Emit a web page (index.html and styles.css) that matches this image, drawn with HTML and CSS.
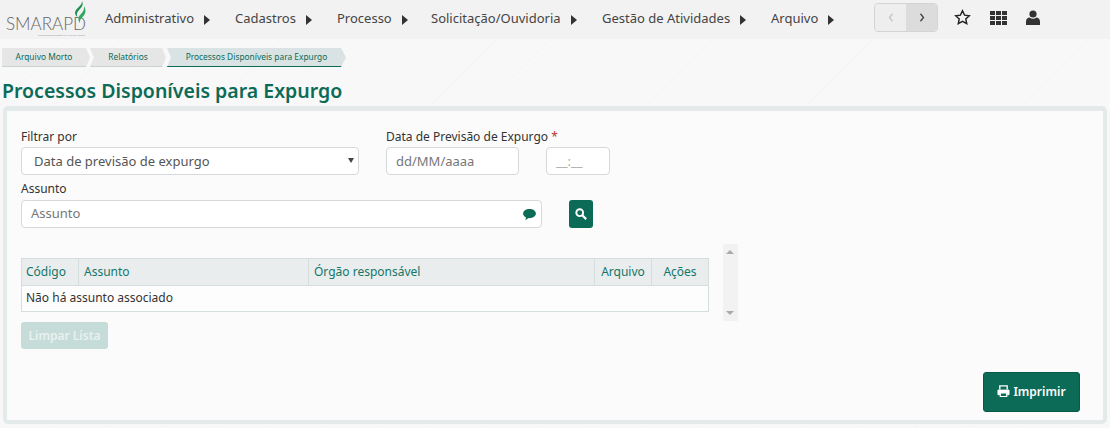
FILE: index.html
```
<!DOCTYPE html>
<html lang="pt">
<head>
<meta charset="utf-8">
<title>Processos Disponíveis para Expurgo</title>
<link rel="stylesheet" href="styles.css">
</head>
<body>
<header class="topbar">
  <a class="logo">
    <span class="logo-word">SMARAPD</span>
    <span class="logo-tag">Simplificando Gestão e a Vida na Cidade</span>
    <svg class="logo-flame" viewBox="0 0 12 22" width="12" height="22"><path d="M8 0c1.500 3 .5 5.500-2 8C3.500 10.500 2 13 3.500 16 1.500 14.500 0 12 2 9c2-3 6-4.500 6-9z" fill="#1f8f4e"/><path d="M10 5c2.500 4.500 1.500 8-1 10.500-2 2-3.500 3.500-3 6.500-2.500-3-2-6 .5-8.500C8.500 11.500 10.500 9 10 5z" fill="#2fa860"/></svg>
  </a>
  <nav class="menu">
    <a class="menu-item m1">Administrativo<i class="caret"></i></a>
    <a class="menu-item m2">Cadastros<i class="caret"></i></a>
    <a class="menu-item m3">Processo<i class="caret"></i></a>
    <a class="menu-item m4">Solicitação/Ouvidoria<i class="caret"></i></a>
    <a class="menu-item m5">Gestão de Atividades<i class="caret"></i></a>
    <a class="menu-item m6">Arquivo<i class="caret"></i></a>
  </nav>
  <div class="pager">
    <span class="pager-btn"><svg viewBox="0 0 8 12" width="6" height="9"><path d="M6 1 2 6l4 5" fill="none" stroke="#c4c4c4" stroke-width="1.8"/></svg></span>
    <span class="pager-btn active"><svg viewBox="0 0 8 12" width="6" height="9"><path d="M2 1l4 5-4 5" fill="none" stroke="#444" stroke-width="1.8"/></svg></span>
  </div>
  <div class="tools">
    <svg viewBox="0 0 24 24" width="17" height="17"><path d="M12 2.500l2.900 6.200 6.700.8-5 4.600 1.400 6.700-6-3.400-6 3.400 1.400-6.700-5-4.600 6.700-.8z" fill="none" stroke="#222" stroke-width="2"/></svg>
    <svg viewBox="0 0 17 14" width="17" height="14"><path d="M0 0h5v4H0zM6 0h5v4H6zM12 0h5v4h-5zM0 5h5v4H0zM6 5h5v4H6zM12 5h5v4h-5zM0 10h5v4H0zM6 10h5v4H6zM12 10h5v4h-5z" fill="#333"/></svg>
    <svg viewBox="0 0 14 15" width="14" height="15"><circle cx="7" cy="4" r="3.600" fill="#333"/><path d="M0 15v-3.500c0-2.500 2-4 3.500-4 1 .8 2.200 1.200 3.500 1.200s2.500-.4 3.500-1.200c1.500 0 3.500 1.500 3.500 4V15z" fill="#333"/></svg>
  </div>
</header>

<main class="page">
  <ol class="crumbs">
    <li class="crumb c1">Arquivo Morto</li>
    <li class="crumb c2">Relatórios</li>
    <li class="crumb c3 current">Processos Disponíveis para Expurgo</li>
  </ol>
  <h1 class="title">Processos Disponíveis para Expurgo</h1>

  <section class="panel">
    <div class="form-row first">
      <div class="field f-filter">
        <label class="label">Filtrar por</label>
        <div class="control select">Data de previsão de expurgo<i class="select-arrow"></i></div>
      </div>
      <div class="field f-date">
        <label class="label">Data de Previsão de Expurgo <span class="req">*</span></label>
        <div class="date-controls">
          <div class="control date">dd/MM/aaaa</div>
          <div class="control time">__:__</div>
        </div>
      </div>
    </div>
    <div class="form-row second">
      <div class="field f-subject">
        <label class="label">Assunto</label>
        <div class="control subject">Assunto
          <svg class="bubble" viewBox="0 0 14 12" width="13" height="11"><path d="M7 0c3.900 0 7 2.200 7 5s-3.100 5-7 5l-1-.1C4.800 11 3.400 11.700 2 12c.7-.8 1.100-1.700 1.200-2.800C1.300 8.300 0 6.800 0 5c0-2.800 3.100-5 7-5z" fill="#0b6b57"/></svg>
        </div>
      </div>
      <button class="search-btn"><svg viewBox="0 0 14 14" width="12" height="12"><circle cx="5.500" cy="5.500" r="4" fill="none" stroke="#fff" stroke-width="2.200"/><path d="M8.500 8.500 13 13" stroke="#fff" stroke-width="2.600"/></svg></button>
    </div>

    <div class="table-wrap">
      <table class="grid">
        <thead>
          <tr>
            <th class="col-code">Código</th>
            <th class="col-subject">Assunto</th>
            <th class="col-org">Órgão responsável</th>
            <th class="col-file">Arquivo</th>
            <th class="col-act">Ações</th>
          </tr>
        </thead>
        <tbody>
          <tr><td colspan="5">Não há assunto associado</td></tr>
        </tbody>
      </table>
      <div class="scroll"><i class="up"></i><i class="down"></i></div>
    </div>
    <button class="clear-btn">Limpar Lista</button>
    <div class="actions">
      <button class="print-btn"><svg viewBox="0 0 14 13" width="13" height="12"><path d="M3 5V1h8v4" fill="none" stroke="#fff" stroke-width="1.500"/><path d="M1 5.500h12v5h-2V8H3v2.500H1z" fill="#fff" stroke="#fff"/><path d="M3.500 8.500h7v4h-7z" fill="none" stroke="#fff" stroke-width="1.300"/></svg>Imprimir</button>
    </div>
  </section>
</main>
</body>
</html>
```
FILE: styles.css
```
* { box-sizing: border-box; }
html, body { margin: 0; height: 100%; }
body {
  width: 1110px;
  height: 428px;
  overflow: hidden;
  font-family: "Noto Sans", "Open Sans", sans-serif;
  font-size: 12px;
  color: #333;
  background: #f8f8f8 repeating-linear-gradient(135deg, #f8f8f8 0, #f8f8f8 36px, #f5f5f5 37px, #f8f8f8 38px);
}
.topbar {
  height: 39px;
  background: #f2f2f2;
  display: flex;
  align-items: flex-start;
}
.logo {
  position: relative;
  display: block;
  width: 105px;
  height: 39px;
  flex: none;
}
.logo-word {
  position: absolute;
  left: 6px;
  top: 15px;
  font-family: "Lato", sans-serif;
  font-weight: 300;
  font-size: 17px;
  line-height: 18px;
  color: #666;
}
.logo-tag {
  position: absolute;
  left: 38px;
  top: 34px;
  font-size: 2.500px;
  line-height: 3px;
  white-space: nowrap;
  color: #999;
}
.logo-flame { position: absolute; left: 74px; top: 1px; }
.menu {
  display: flex;
  width: 769px;
  flex: none;
  padding-top: 9px;
}
.menu-item {
  display: flex;
  align-items: center;
  height: 18px;
  font-size: 13px;
  color: #444;
  white-space: nowrap;
}
.m1 { width: 130px; }
.m2 { width: 102px; }
.m3 { width: 94px; }
.m4 { width: 171px; }
.m5 { width: 169px; }
.caret {
  width: 0;
  height: 0;
  margin-left: 10px;
  margin-top: 4px;
  border-left: 6px solid #333;
  border-top: 5px solid transparent;
  border-bottom: 5px solid transparent;
}
.pager {
  display: flex;
  width: 64px;
  height: 29px;
  margin-top: 3px;
  border: 1px solid #d4d4d4;
  border-radius: 4px;
  overflow: hidden;
  flex: none;
}
.pager-btn {
  flex: 1;
  display: flex;
  align-items: center;
  justify-content: center;
  background: #eee;
}
.pager-btn.active { background: #dcdcdc; }
.tools {
  display: flex;
  align-items: center;
  gap: 19px;
  margin-left: 16px;
  padding-top: 9px;
}
.page { padding: 0 3px; }
.crumbs {
  display: flex;
  list-style: none;
  margin: 9px 0 0 -1px;
  padding: 0;
  height: 19px;
}
.crumb {
  height: 19px;
  font-size: 8.400px;
  line-height: 18px;
  color: #0b6b57;
  background: #e6e6e6;
  border-bottom: 1px solid #c9d3d3;
  text-align: center;
  clip-path: polygon(0 0, calc(100% - 4px) 0, 100% 50%, calc(100% - 4px) 100%, 0 100%, 4px 50%);
  white-space: nowrap;
}
.c1 {
  width: 88px;
  padding-right: 4px;
  clip-path: polygon(0 0, calc(100% - 4px) 0, 100% 50%, calc(100% - 4px) 100%, 0 100%);
}
.c2 { width: 76px; }
.c3 { width: 179px; margin-left: 1px; clip-path: polygon(0 0, calc(100% - 5px) 0, 100% 50%, calc(100% - 5px) 100%, 0 100%, 4px 50%); }
.crumb.current {
  background: #d9e3e4;
  border-bottom: 1px solid #0b6b57;
}
.title {
  margin: 11px 0 0 -1px;
  font-size: 19.500px;
  line-height: 26px;
  font-weight: 600;
  color: #0b6b57;
}
.panel {
  height: 318px;
  margin-top: 2px;
  padding: 17px 14px 0;
  background: #fbfbfb;
  border: 4px solid #e4e9e9;
  border-top-width: 5px;
  border-radius: 5px;
}
.form-row { display: flex; }
.label {
  display: block;
  margin-bottom: 1px;
  font-size: 12px;
  line-height: 18px;
  color: #333;
  white-space: nowrap;
}
.req { color: #b33; }
.control {
  height: 28px;
  padding: 0 9px;
  font-size: 13px;
  line-height: 26px;
  color: #777;
  background: #fff;
  border: 1px solid #d5d9d9;
  border-radius: 4px;
}
.f-filter { width: 338px; margin-right: 27px; }
.select {
  position: relative;
  padding-left: 12px;
  color: #555;
}
.select-arrow {
  position: absolute;
  right: 4px;
  top: 10px;
  border-top: 5px solid #444;
  border-left: 3px solid transparent;
  border-right: 3px solid transparent;
}
.date-controls { display: flex; gap: 27px; }
.date { width: 133px; }
.time { width: 64px; padding-left: 9px; font-size: 13px; color: #aaa; }
.second { margin-top: 5px; }
.f-subject { width: 521px; }
.f-subject .label { margin-bottom: 2px; }
.subject { position: relative; line-height: 24px; }
.bubble { position: absolute; right: 5px; top: 8px; }
.search-btn {
  align-self: flex-end;
  width: 24px;
  height: 28px;
  margin-left: 27px;
  padding: 0;
  display: flex;
  align-items: center;
  justify-content: center;
  background: #0b6b57;
  border: 0;
  border-radius: 3px;
}
.table-wrap {
  display: flex;
  margin-top: 16px;
}
.grid {
  width: 688px;
  height: 54px;
  margin-top: 14px;
  border-collapse: collapse;
  table-layout: fixed;
  background: #fdfdfd;
  border: 1px solid #d4dedd;
}
.grid th, .grid td {
  padding: 0 5px 2px;
  font-size: 12px;
  text-align: left;
  font-weight: 400;
  white-space: nowrap;
}
.grid th:first-child, .grid td:first-child { padding-left: 4px; }
.grid th {
  height: 27px;
  color: #14766b;
  background: #e9eded;
  border: 1px solid #d4dedd;
}
.grid .col-file, .grid .col-act { text-align: center; }
.grid td { height: 26px; color: #333; }
.col-code { width: 57px; }
.col-subject { width: 230px; }
.col-org { width: 286px; }
.col-file { width: 57px; }
.scroll {
  position: relative;
  width: 15px;
  height: 77px;
  margin-left: 14px;
  background: #f2f2f2;
}
.up, .down {
  position: absolute;
  left: 3px;
  border-left: 4px solid transparent;
  border-right: 4px solid transparent;
}
.up { top: 6px; border-bottom: 4px solid #aaa; }
.down { bottom: 6px; border-top: 4px solid #aaa; }
.clear-btn {
  display: block;
  width: 87px;
  height: 27px;
  margin-top: 1px;
  padding: 0 0 1px;
  font-family: inherit;
  font-size: 12px;
  font-weight: 600;
  color: #e9f1ef;
  background: #c6dcd8;
  border: 0;
  border-radius: 3px;
}
.actions {
  display: flex;
  justify-content: flex-end;
  margin-top: 23px;
  margin-right: 9px;
}
.print-btn {
  display: flex;
  align-items: center;
  justify-content: center;
  gap: 3px;
  width: 97px;
  height: 40px;
  padding: 0 0 2px;
  font-family: inherit;
  font-size: 12px;
  font-weight: 600;
  color: #fff;
  background: #0b6b57;
  border: 1px solid #09594a;
  border-radius: 3px;
}
```
